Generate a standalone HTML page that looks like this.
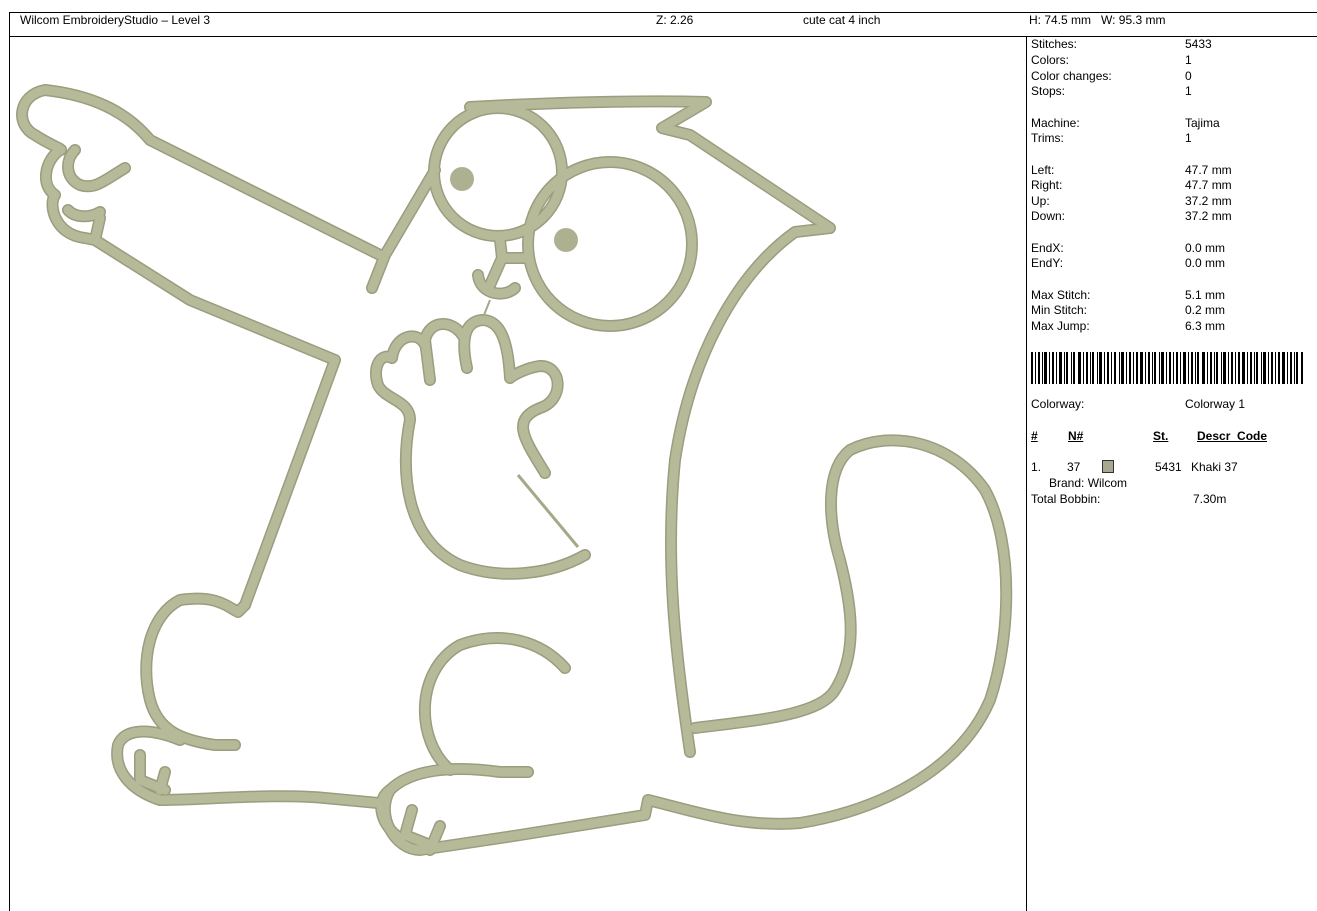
<!DOCTYPE html>
<html><head><meta charset="utf-8"><style>
html,body{margin:0;padding:0;background:#fff;}
body{width:1317px;height:911px;position:relative;overflow:hidden;font-family:"Liberation Sans",Arial,sans-serif;font-size:12px;color:#000;}
.t{position:absolute;white-space:nowrap;line-height:14px;}
.hl{position:absolute;background:#000;height:1px;}
.vl{position:absolute;background:#000;width:1px;}
u{text-decoration:underline;font-weight:bold;}
</style></head><body>
<div class="hl" style="left:9px;top:12px;width:1308px"></div>
<div class="hl" style="left:9px;top:36px;width:1308px"></div>
<div class="vl" style="left:9px;top:12px;height:899px"></div>
<div class="vl" style="left:1026px;top:36px;height:875px"></div>

<div class="t" style="left:20px;top:13px">Wilcom EmbroideryStudio – Level 3</div>
<div class="t" style="left:656px;top:13px">Z: 2.26</div>
<div class="t" style="left:803px;top:13px">cute cat 4 inch</div>
<div class="t" style="left:1029px;top:13px">H: 74.5 mm &nbsp; W: 95.3 mm</div>

<div class="t" style="left:1031px;top:37px">Stitches:</div><div class="t" style="left:1185px;top:37px">5433</div>
<div class="t" style="left:1031px;top:53px">Colors:</div><div class="t" style="left:1185px;top:53px">1</div>
<div class="t" style="left:1031px;top:69px">Color changes:</div><div class="t" style="left:1185px;top:69px">0</div>
<div class="t" style="left:1031px;top:84px">Stops:</div><div class="t" style="left:1185px;top:84px">1</div>
<div class="t" style="left:1031px;top:116px">Machine:</div><div class="t" style="left:1185px;top:116px">Tajima</div>
<div class="t" style="left:1031px;top:131px">Trims:</div><div class="t" style="left:1185px;top:131px">1</div>
<div class="t" style="left:1031px;top:163px">Left:</div><div class="t" style="left:1185px;top:163px">47.7 mm</div>
<div class="t" style="left:1031px;top:178px">Right:</div><div class="t" style="left:1185px;top:178px">47.7 mm</div>
<div class="t" style="left:1031px;top:194px">Up:</div><div class="t" style="left:1185px;top:194px">37.2 mm</div>
<div class="t" style="left:1031px;top:209px">Down:</div><div class="t" style="left:1185px;top:209px">37.2 mm</div>
<div class="t" style="left:1031px;top:241px">EndX:</div><div class="t" style="left:1185px;top:241px">0.0 mm</div>
<div class="t" style="left:1031px;top:256px">EndY:</div><div class="t" style="left:1185px;top:256px">0.0 mm</div>
<div class="t" style="left:1031px;top:288px">Max Stitch:</div><div class="t" style="left:1185px;top:288px">5.1 mm</div>
<div class="t" style="left:1031px;top:303px">Min Stitch:</div><div class="t" style="left:1185px;top:303px">0.2 mm</div>
<div class="t" style="left:1031px;top:319px">Max Jump:</div><div class="t" style="left:1185px;top:319px">6.3 mm</div>

<svg style="position:absolute;left:1031px;top:352px" width="273" height="32">
<g fill="#000">
<rect x="0" y="0" width="2" height="32"/><rect x="4" y="0" width="1" height="32"/><rect x="7" y="0" width="2" height="32"/><rect x="11" y="0" width="1" height="32"/><rect x="13" y="0" width="3" height="32"/><rect x="18" y="0" width="1" height="32"/><rect x="21" y="0" width="2" height="32"/><rect x="25" y="0" width="1" height="32"/><rect x="28" y="0" width="3" height="32"/><rect x="33" y="0" width="1" height="32"/><rect x="35" y="0" width="2" height="32"/><rect x="40" y="0" width="1" height="32"/><rect x="42" y="0" width="2" height="32"/><rect x="47" y="0" width="3" height="32"/><rect x="52" y="0" width="1" height="32"/><rect x="55" y="0" width="2" height="32"/><rect x="59" y="0" width="1" height="32"/><rect x="61" y="0" width="2" height="32"/><rect x="66" y="0" width="1" height="32"/><rect x="68" y="0" width="3" height="32"/><rect x="73" y="0" width="1" height="32"/><rect x="76" y="0" width="2" height="32"/><rect x="80" y="0" width="1" height="32"/><rect x="83" y="0" width="2" height="32"/><rect x="88" y="0" width="1" height="32"/><rect x="90" y="0" width="3" height="32"/><rect x="95" y="0" width="1" height="32"/><rect x="98" y="0" width="2" height="32"/><rect x="102" y="0" width="1" height="32"/><rect x="105" y="0" width="2" height="32"/><rect x="109" y="0" width="3" height="32"/><rect x="114" y="0" width="1" height="32"/><rect x="117" y="0" width="2" height="32"/><rect x="121" y="0" width="1" height="32"/><rect x="123" y="0" width="2" height="32"/><rect x="128" y="0" width="1" height="32"/><rect x="130" y="0" width="3" height="32"/><rect x="135" y="0" width="1" height="32"/><rect x="138" y="0" width="2" height="32"/><rect x="142" y="0" width="1" height="32"/><rect x="145" y="0" width="2" height="32"/><rect x="149" y="0" width="1" height="32"/><rect x="152" y="0" width="3" height="32"/><rect x="157" y="0" width="1" height="32"/><rect x="160" y="0" width="2" height="32"/><rect x="164" y="0" width="1" height="32"/><rect x="166" y="0" width="2" height="32"/><rect x="171" y="0" width="3" height="32"/><rect x="176" y="0" width="1" height="32"/><rect x="179" y="0" width="2" height="32"/><rect x="183" y="0" width="1" height="32"/><rect x="185" y="0" width="2" height="32"/><rect x="190" y="0" width="1" height="32"/><rect x="192" y="0" width="3" height="32"/><rect x="197" y="0" width="1" height="32"/><rect x="200" y="0" width="2" height="32"/><rect x="204" y="0" width="1" height="32"/><rect x="207" y="0" width="2" height="32"/><rect x="211" y="0" width="3" height="32"/><rect x="216" y="0" width="1" height="32"/><rect x="219" y="0" width="2" height="32"/><rect x="223" y="0" width="1" height="32"/><rect x="225" y="0" width="2" height="32"/><rect x="230" y="0" width="1" height="32"/><rect x="232" y="0" width="3" height="32"/><rect x="237" y="0" width="1" height="32"/><rect x="240" y="0" width="2" height="32"/><rect x="244" y="0" width="1" height="32"/><rect x="247" y="0" width="2" height="32"/><rect x="251" y="0" width="3" height="32"/><rect x="256" y="0" width="1" height="32"/><rect x="259" y="0" width="2" height="32"/><rect x="263" y="0" width="1" height="32"/><rect x="265" y="0" width="2" height="32"/><rect x="270" y="0" width="2" height="32"/>
</g></svg>

<div class="t" style="left:1031px;top:397px">Colorway:</div><div class="t" style="left:1185px;top:397px">Colorway 1</div>
<div class="t" style="left:1031px;top:429px"><u>#</u></div>
<div class="t" style="left:1068px;top:429px"><u>N#</u></div>
<div class="t" style="left:1153px;top:429px"><u>St.</u></div>
<div class="t" style="left:1197px;top:429px"><u>Descr_Code</u></div>
<div class="t" style="left:1031px;top:460px">1.</div>
<div class="t" style="left:1067px;top:460px">37</div>
<div style="position:absolute;left:1102px;top:460px;width:10px;height:11px;background:#a8a890;border:1px solid #333"></div>
<div class="t" style="left:1155px;top:460px">5431</div>
<div class="t" style="left:1191px;top:460px">Khaki 37</div>
<div class="t" style="left:1049px;top:476px">Brand: Wilcom</div>
<div class="t" style="left:1031px;top:492px">Total Bobbin:</div>
<div class="t" style="left:1193px;top:492px">7.30m</div>

<svg style="position:absolute;left:0;top:0" width="1026" height="911">
<defs>
<g id="cat" fill="none" stroke-linecap="round" stroke-linejoin="round">
<path d="M380,255 L150,140 C125,110 90,95 45,90 C18,95 15,125 35,135 C50,145 65,150 60,150 C45,160 40,185 55,195 C48,205 55,235 85,238 L95,240 L190,300 L335,360 L245,605"/>
<path d="M125,168 C105,180 95,190 80,185 C65,178 65,160 75,150"/>
<path d="M100,212 C90,218 75,218 68,210"/>
<path d="M95,240 L100,218"/>
<path d="M372,288 L385,255 L435,170"/>
<circle cx="498" cy="172" r="64"/>
<circle cx="610" cy="244" r="82"/>
<path d="M470,107 C540,103 640,100 706,102 L662,128 L690,135 L830,228 L795,232 C735,275 690,360 675,460 C665,560 675,650 690,752"/>
<path d="M695,728 C760,720 820,715 835,690 C860,650 850,600 840,560 C828,520 825,470 850,450 C890,430 950,440 985,490 C1015,545 1010,640 990,700 C960,770 880,810 800,823 C740,828 690,810 648,800 L645,815 L520,835 L420,850 C395,850 375,815 390,790 C410,770 450,765 500,772 L528,772"/>
<path d="M565,668 C540,640 500,630 460,645 C415,670 415,740 450,770"/>
<path d="M390,790 C375,800 380,825 400,838"/>
<path d="M412,810 L405,835 L430,845"/>
<path d="M440,826 L430,850"/>
<path d="M245,605 L238,612 C225,605 215,595 180,600 C150,615 140,660 150,700 C158,730 180,740 215,745 L235,745 M180,740 C150,728 125,728 118,745 C113,770 130,790 160,800 C200,800 280,793 325,798 L378,803"/>
<path d="M140,755 L140,780 L165,790 M160,790 L165,772"/>
<path d="M500,240 L502,258 L527,258 M502,258 L490,285"/>
<path d="M478,275 C480,295 505,298 515,288"/>
<path d="M545,473 C525,440 510,420 540,408 C565,400 562,365 540,366 C525,368 512,376 510,378 C508,340 500,320 482,320 C462,322 462,345 467,368"/>
<path d="M464,338 C455,320 430,318 425,340 L430,380"/>
<path d="M425,345 C418,330 395,335 392,358 C380,352 372,368 378,385 C385,400 410,400 410,420 C400,470 405,540 460,565 C500,580 550,575 585,555"/>
</g>
</defs>
<use href="#cat" stroke="#9a9d7e" stroke-width="12"/>
<use href="#cat" stroke="#b7ba99" stroke-width="9"/>
<circle cx="462" cy="179" r="12" fill="#aeb191"/>
<circle cx="566" cy="240" r="12" fill="#aeb191"/>
<line x1="518" y1="475" x2="578" y2="547" stroke="#a6a88a" stroke-width="3"/>
<line x1="490" y1="300" x2="484" y2="315" stroke="#a6a88a" stroke-width="2"/>
</svg>
</body></html>
